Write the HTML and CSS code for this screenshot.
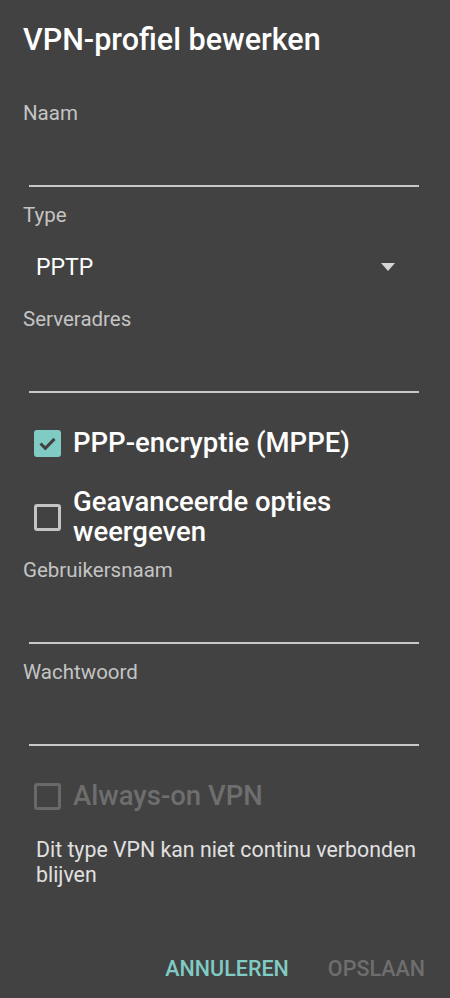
FILE: index.html
```html
<!DOCTYPE html>
<html lang="nl">
<head>
    <meta charset="UTF-8">
    <meta name="viewport" content="width=device-width, initial-scale=1.0">
    <title>VPN-profiel bewerken</title>
    <link rel="stylesheet" href="styles.css">
</head>
<body>

    <div class="dialog">
        <h1>VPN-profiel bewerken</h1>

        <div class="field first">
            <label>Naam</label>
            <div class="input"></div>
        </div>

        <div class="field">
            <label>Type</label>
            <div class="spinner">
                <span>PPTP</span>
                <svg width="14" height="8" viewBox="0 0 14 8"><path d="M0 0h14L7 8z" fill="#d6d6d6"/></svg>
            </div>
        </div>

        <div class="field tight">
            <label>Serveradres</label>
            <div class="input"></div>
        </div>

        <div class="check first-check">
            <span class="box checked">
                <svg width="27" height="27" viewBox="0 0 27 27"><path d="M6.5 13.5l4.8 4.8 9.2-9.4" fill="none" stroke="#424242" stroke-width="3"/></svg>
            </span>
            <span class="text">PPP-encryptie (MPPE)</span>
        </div>

        <div class="check second-check">
            <span class="box"></span>
            <span class="text">Geavanceerde opties<br>weergeven</span>
        </div>

        <div class="field after-check">
            <label>Gebruikersnaam</label>
            <div class="input"></div>
        </div>

        <div class="field">
            <label>Wachtwoord</label>
            <div class="input"></div>
        </div>

        <div class="check first-check disabled">
            <span class="box"></span>
            <span class="text">Always-on VPN</span>
        </div>

        <p class="hint">Dit type VPN kan niet continu verbonden blijven</p>

        <div class="actions">
            <button class="primary">ANNULEREN</button>
            <button class="muted">OPSLAAN</button>
        </div>
    </div>

</body>
</html>
```

FILE: styles.css
```css
/* Dialog */
body {
    margin: 0;
    background: #424242;
    font-family: Roboto, 'Noto Sans', sans-serif;
    color: #fff;
}
.dialog {
    padding: 22px 23px 0 23px;
}
h1 {
    margin: 0;
    font-size: 30.5px;
    font-weight: 500;
    line-height: 36px;
}

/* Text fields */
.field {
    margin-top: 16px;
}
.field.first {
    margin-top: 43px;
}
.field.tight {
    margin-top: 0;
}
.field.after-check {
    margin-top: 11px;
}
label {
    display: block;
    font-size: 20.5px;
    line-height: 24px;
    color: #c4c4c4;
}
.input {
    height: 60px;
    margin: 0 8px 0 6px;
    border-bottom: 2px solid #c8c8c8;
}
.spinner {
    height: 80px;
    display: flex;
    align-items: center;
    justify-content: space-between;
    padding: 0 32px 0 13px;
    font-size: 23px;
}

/* Checkboxes */
.check {
    display: flex;
    align-items: center;
    gap: 12px;
    padding-left: 11px;
    margin-top: 29px;
}
.check.first-check {
    margin-top: 35px;
}
.box {
    width: 27px;
    height: 27px;
    box-sizing: border-box;
    border: 3px solid #c4c4c4;
    border-radius: 3px;
    flex-shrink: 0;
}
.box.checked {
    border: none;
    background: #80cbc4;
}
.box svg {
    display: block;
}
.check .text {
    font-size: 27.5px;
    font-weight: 500;
    line-height: 30px;
}
.check.disabled .box {
    border-color: #696969;
}
.check.disabled .text {
    color: #6e6e6e;
}

.hint {
    margin: 26px 0 0 13px;
    font-size: 21.3px;
    line-height: 25px;
    color: #e0e0e0;
}

/* Buttons */
.actions {
    display: flex;
    justify-content: flex-end;
    gap: 39px;
    margin-top: 70px;
    padding-right: 2px;
}
button {
    background: none;
    border: none;
    padding: 0;
    font-family: Roboto, sans-serif;
    font-size: 21.5px;
    font-weight: 500;
    line-height: 24px;
}
.primary {
    color: #80cbc4;
}
.muted {
    color: #6e6e6e;
}
```
